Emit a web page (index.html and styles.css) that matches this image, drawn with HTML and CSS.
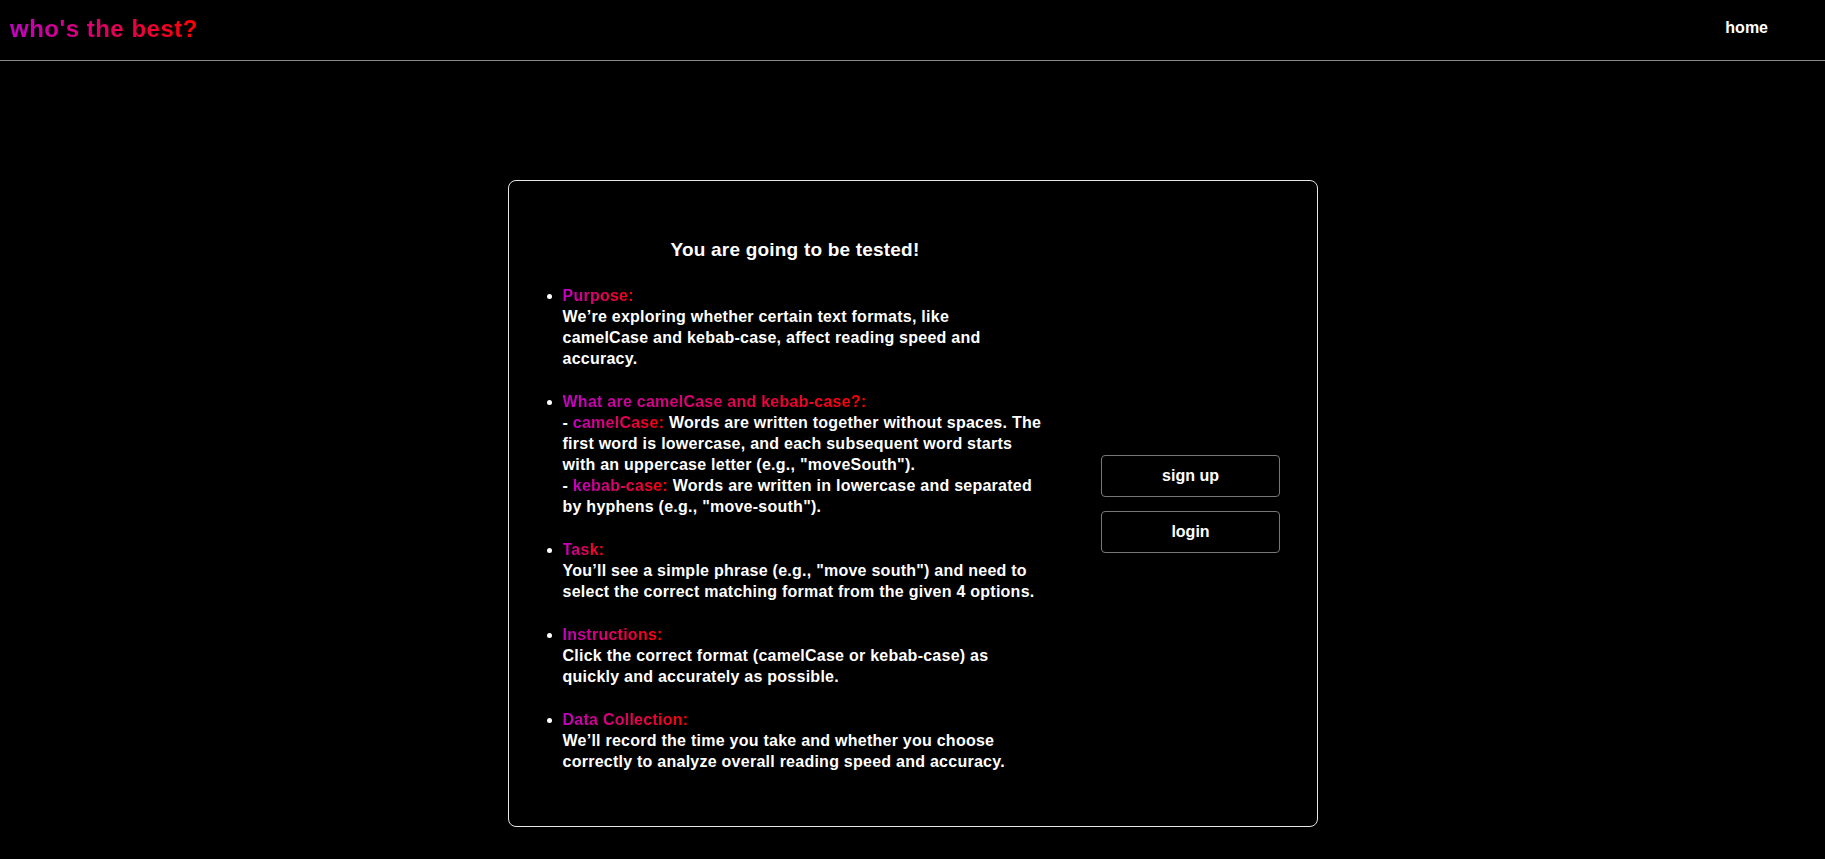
FILE: index.html
```html
<!DOCTYPE html>
<html lang="en">
<head>
<meta charset="utf-8">
<title>who's the best?</title>
<link rel="stylesheet" href="styles.css">
</head>
<body>
<header class="topbar">
  <a class="logo" href="#">who's the best?</a>
  <nav class="nav"><a class="nav-link" href="#">home</a></nav>
</header>
<main class="page">
  <section class="card">
    <div class="info">
      <h3 class="title">You are going to be tested!</h3>
      <ul class="points">
        <li class="point"><span class="label">Purpose:</span><br>We’re exploring whether certain text formats, like<br>camelCase and kebab-case, affect reading speed and<br>accuracy.</li>
        <li class="point"><span class="label">What are camelCase and kebab-case?:</span><br>- <span class="label">camelCase:</span> Words are written together without spaces. The<br>first word is lowercase, and each subsequent word starts<br>with an uppercase letter (e.g., "moveSouth").<br>- <span class="label">kebab-case:</span> Words are written in lowercase and separated<br>by hyphens (e.g., "move-south").</li>
        <li class="point"><span class="label">Task:</span><br>You’ll see a simple phrase (e.g., "move south") and need to<br>select the correct matching format from the given 4 options.</li>
        <li class="point"><span class="label">Instructions:</span><br>Click the correct format (camelCase or kebab-case) as<br>quickly and accurately as possible.</li>
        <li class="point"><span class="label">Data Collection:</span><br>We’ll record the time you take and whether you choose<br>correctly to analyze overall reading speed and accuracy.</li>
      </ul>
    </div>
    <div class="actions">
      <button class="btn" type="button">sign up</button>
      <button class="btn" type="button">login</button>
    </div>
  </section>
</main>
</body>
</html>
```
FILE: styles.css
```css
* { box-sizing: border-box; }
html, body { margin: 0; padding: 0; background: #000; color: #fff; }
body { font-family: "Liberation Sans", Arial, sans-serif; min-height: 859px; }

.topbar {
  height: 61px;
  display: flex;
  align-items: center;
  justify-content: space-between;
  padding: 0 57px 0 10px;
  border-bottom: 1px solid #8a8a8a;
}
.logo {
  font-size: 24px;
  font-weight: 700;
  letter-spacing: 0.5px;
  text-decoration: none;
  background: linear-gradient(90deg, #c400c4, #ff0000);
  -webkit-background-clip: text;
  background-clip: text;
  color: transparent;
  padding-bottom: 2px;
}
.nav-link {
  color: #fff;
  text-decoration: none;
  font-size: 16px;
  font-weight: 700;
  position: relative;
  top: -2px;
}

.page {
  display: flex;
  justify-content: center;
  padding-top: 119px;
}
.card {
  width: 810px;
  display: flex;
  border: 1px solid #e6e6e6;
  border-radius: 8px;
}
.info {
  width: 559px;
  padding: 58px 0 54px 14px;
}
.title {
  margin: 0 0 24px;
  text-align: center;
  font-size: 19px;
  line-height: 22px;
  font-weight: 700;
  letter-spacing: 0.2px;
}
.points {
  margin: 0;
  padding: 0 10px 0 40px;
  font-size: 16px;
  line-height: 21px;
  font-weight: 700;
  letter-spacing: 0.25px;
  white-space: nowrap;
}
.point { margin-bottom: 22px; }
.point:last-child { margin-bottom: 0; }
.label {
  background: linear-gradient(90deg, #c400c4, #ff0000);
  -webkit-background-clip: text;
  background-clip: text;
  color: transparent;
}

.actions {
  flex: 1;
  display: flex;
  flex-direction: column;
  justify-content: center;
  align-items: center;
  gap: 14px;
  padding-right: 3px;
}
.btn {
  width: 179px;
  height: 42px;
  background: #000;
  color: #fff;
  border: 1px solid #777;
  border-radius: 4px;
  font-family: "Liberation Sans", Arial, sans-serif;
  font-size: 16px;
  font-weight: 700;
  cursor: pointer;
}
```
